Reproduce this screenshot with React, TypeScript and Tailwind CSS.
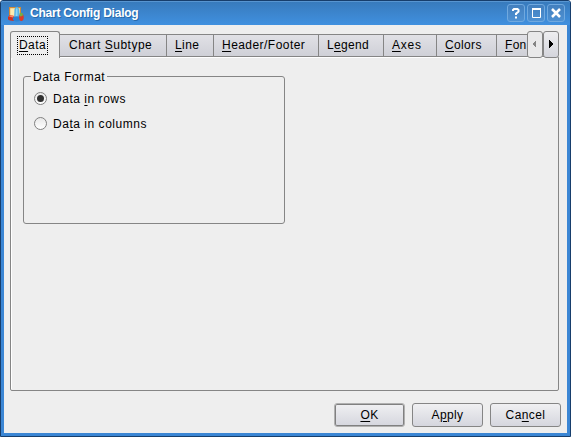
import React from "react";

function Mnemonic({ text, at }: { text: string; at: number }) {
  return (
    <span className="whitespace-pre">
      {text.slice(0, at)}
      <span className="underline decoration-1 underline-offset-2">{text[at]}</span>
      {text.slice(at + 1)}
    </span>
  );
}

const tabs = [
  { text: "Chart Subtype", at: 6, box: "w-[107px] pl-[9px]", spacing: "tracking-[0.5px]" },
  { text: "Line", at: 0, box: "w-[47px] pl-[8px]", spacing: "tracking-[0.4px]" },
  { text: "Header/Footer", at: 0, box: "w-[105px] pl-[8px]", spacing: "tracking-[0.45px]" },
  { text: "Legend", at: 1, box: "w-[65px] pl-[8px]", spacing: "tracking-[0.3px]" },
  { text: "Axes", at: 0, box: "w-[53px] pl-[8px]", spacing: "tracking-[0.8px]" },
  { text: "Colors", at: 0, box: "w-[60px] pl-[8px]", spacing: "tracking-[0.35px]" },
  { text: "Fon", at: 0, box: "w-[31px] pl-[8px]", spacing: "tracking-[0.3px]" },
];

function AppIcon() {
  return (
    <svg className="ml-[4px] mt-[4px] h-4 w-4 shrink-0" viewBox="0 0 16 16">
      <path d="M1 1h12v11H1z" fill="#d28a35" />
      <path d="M2.2 2.2h9.6v8H2.2z" fill="#fdebb0" />
      <path d="M0 11l2-2 4 1v5l-4-.5-2-1z" fill="#d4301f" />
      <path d="M1 10.5L3 9l3 1-1 1.5z" fill="#f58a68" />
      <path d="M6 13l.5-10Q9 -1.5 11 3l1 9z" fill="#55b2e6" />
      <path d="M7.5 11L8 3q1-2 1.5 0v8z" fill="#8dd6f8" />
      <ellipse cx="8.8" cy="12.8" rx="4" ry="2.6" fill="#2c83d2" />
      <ellipse cx="13.4" cy="11.2" rx="2.3" ry="3.8" fill="#dd3828" />
      <path d="M11.5 7.5q2-1.5 3.5.5l-.5 2-2.5.5z" fill="#72ae48" />
    </svg>
  );
}

function TitleButton({ children }: { children: React.ReactNode }) {
  return (
    <div className="h-[18px] w-[18px] rounded-[3px] border border-[#70a9df] bg-gradient-to-b from-[#427fbe] to-[#4e91d3]">
      <svg className="h-4 w-4" viewBox="0 0 16 16" fill="none" stroke="white">
        {children}
      </svg>
    </div>
  );
}

function Arrow({ left = false }: { left?: boolean }) {
  return (
    <div className={`h-[27px] w-[16px] rounded-[3px] border border-[#858585] ${left ? "bg-[#e9e9ea]" : "bg-gradient-to-b from-[#eeeef0] to-[#d4d5dc]"}`}>
      <svg className="h-[25px] w-[14px]" viewBox="0 0 14 25" shapeRendering="crispEdges">
        <path d={left ? "M8 8v8L4 12z" : "M5 8v8L9 12z"} fill={left ? "#858585" : "#000"} />
      </svg>
    </div>
  );
}

function Radio({ text, at, selected = false }: { text: string; at: number; selected?: boolean }) {
  return (
    <label className="flex h-[14px] items-center">
      <span className="flex h-[13px] w-[13px] items-center justify-center rounded-full border border-[#808080] bg-gradient-to-b from-[#e8e8e8] to-white">
        {selected && <span className="h-[7px] w-[7px] rounded-full bg-[#303030]" />}
      </span>
      <span className="ml-[6px] pt-px tracking-[0.53px]"><Mnemonic text={text} at={at} /></span>
    </label>
  );
}

function DialogButton({ text, at, primary = false }: { text: string; at: number; primary?: boolean }) {
  return (
    <button className={`flex h-6 w-[71px] items-center justify-center rounded-[3px] border bg-gradient-to-b from-[#f0f0f2] to-[#d5d6de] pb-px tracking-[0.4px] ${primary ? "border-[#b0b0b0] shadow-[inset_0_0_0_1px_#808080]" : "border-[#858585]"}`}>
      <Mnemonic text={text} at={at} />
    </button>
  );
}

export default function App() {
  return (
    <main className="flex h-[437px] w-[571px] flex-col rounded-t-[3px] border border-[#173e6c] bg-[#3b86d4] font-['Liberation_Sans',Arial,sans-serif] text-[12px] leading-[14px] text-black">
      <header className="flex h-6 shrink-0 rounded-t-[2px] border-t border-[#5795d1] bg-gradient-to-b from-[#387bbd] to-[#4090df] pl-[3px]">
        <AppIcon />
        <h1 className="ml-[6px] mt-[4px] text-[12px] font-bold tracking-[-0.22px] text-white [text-shadow:1px_1px_#2769aa]">Chart Config Dialog</h1>
        <div className="ml-auto mr-[5px] mt-[2px] flex gap-[2px]">
          <TitleButton><path d="M5 6V5l1-1h3.5l1 1v1.5L8 8.8V10M8 11.5v2" strokeWidth="2" /></TitleButton>
          <TitleButton><path d="M4.5 4v8.5h8V4" strokeWidth="1" /><path d="M4 4h9" strokeWidth="2" /></TitleButton>
          <TitleButton><path d="M4 4l8 8M12 4l-8 8" strokeWidth="2.5" /></TitleButton>
        </div>
      </header>
      <section className="mx-[3px] mb-[3px] flex flex-1 flex-col bg-[#eee] px-[6px] pt-[6px]">
        <nav className="z-10 flex h-[27px] shrink-0">
          <div className="z-10 h-[27px] w-[50px] rounded-t-[3px] border border-b-0 border-[#858585] bg-[#eee] pl-[6px] pt-[4px]">
            <div className="h-[19px] w-[31px] border border-dotted border-black pl-px pt-px tracking-[0.4px]"><Mnemonic text="Data" at={0} /></div>
          </div>
          <div className="mt-[3px] flex h-[23px] overflow-hidden border-y border-[#858585] bg-gradient-to-b from-[#e1e1e6] to-[#cfd0d7]">
            {tabs.map((tab) => (
              <div key={tab.text} className={`${tab.box} ${tab.spacing} shrink-0 overflow-hidden border-r border-[#858585] pt-[3px] last:border-r-0`}>
                <Mnemonic text={tab.text} at={tab.at} />
              </div>
            ))}
          </div>
          <div className="-ml-px flex"><Arrow left /><Arrow /></div>
        </nav>
        <div className="-mt-[2px] h-[335px] w-[549px] rounded-[2px] border border-[#858585] px-[12px] pt-[19px] shadow-[inset_1px_1px_white]">
          <fieldset className="relative h-[148px] w-[262px] rounded-[3px] border border-[#858585]">
            <legend className="absolute -top-[7px] left-[7px] bg-[#eee] px-[2px] tracking-[0.5px]">Data Format</legend>
            <div className="flex flex-col gap-[11px] pl-[10px] pt-[14px]">
              <Radio text="Data in rows" at={5} selected />
              <Radio text="Data in columns" at={2} />
            </div>
          </fieldset>
        </div>
        <footer className="mt-[12px] flex justify-end gap-[7px]">
          <DialogButton text="OK" at={0} primary />
          <DialogButton text="Apply" at={1} />
          <DialogButton text="Cancel" at={2} />
        </footer>
      </section>
    </main>
  );
}
